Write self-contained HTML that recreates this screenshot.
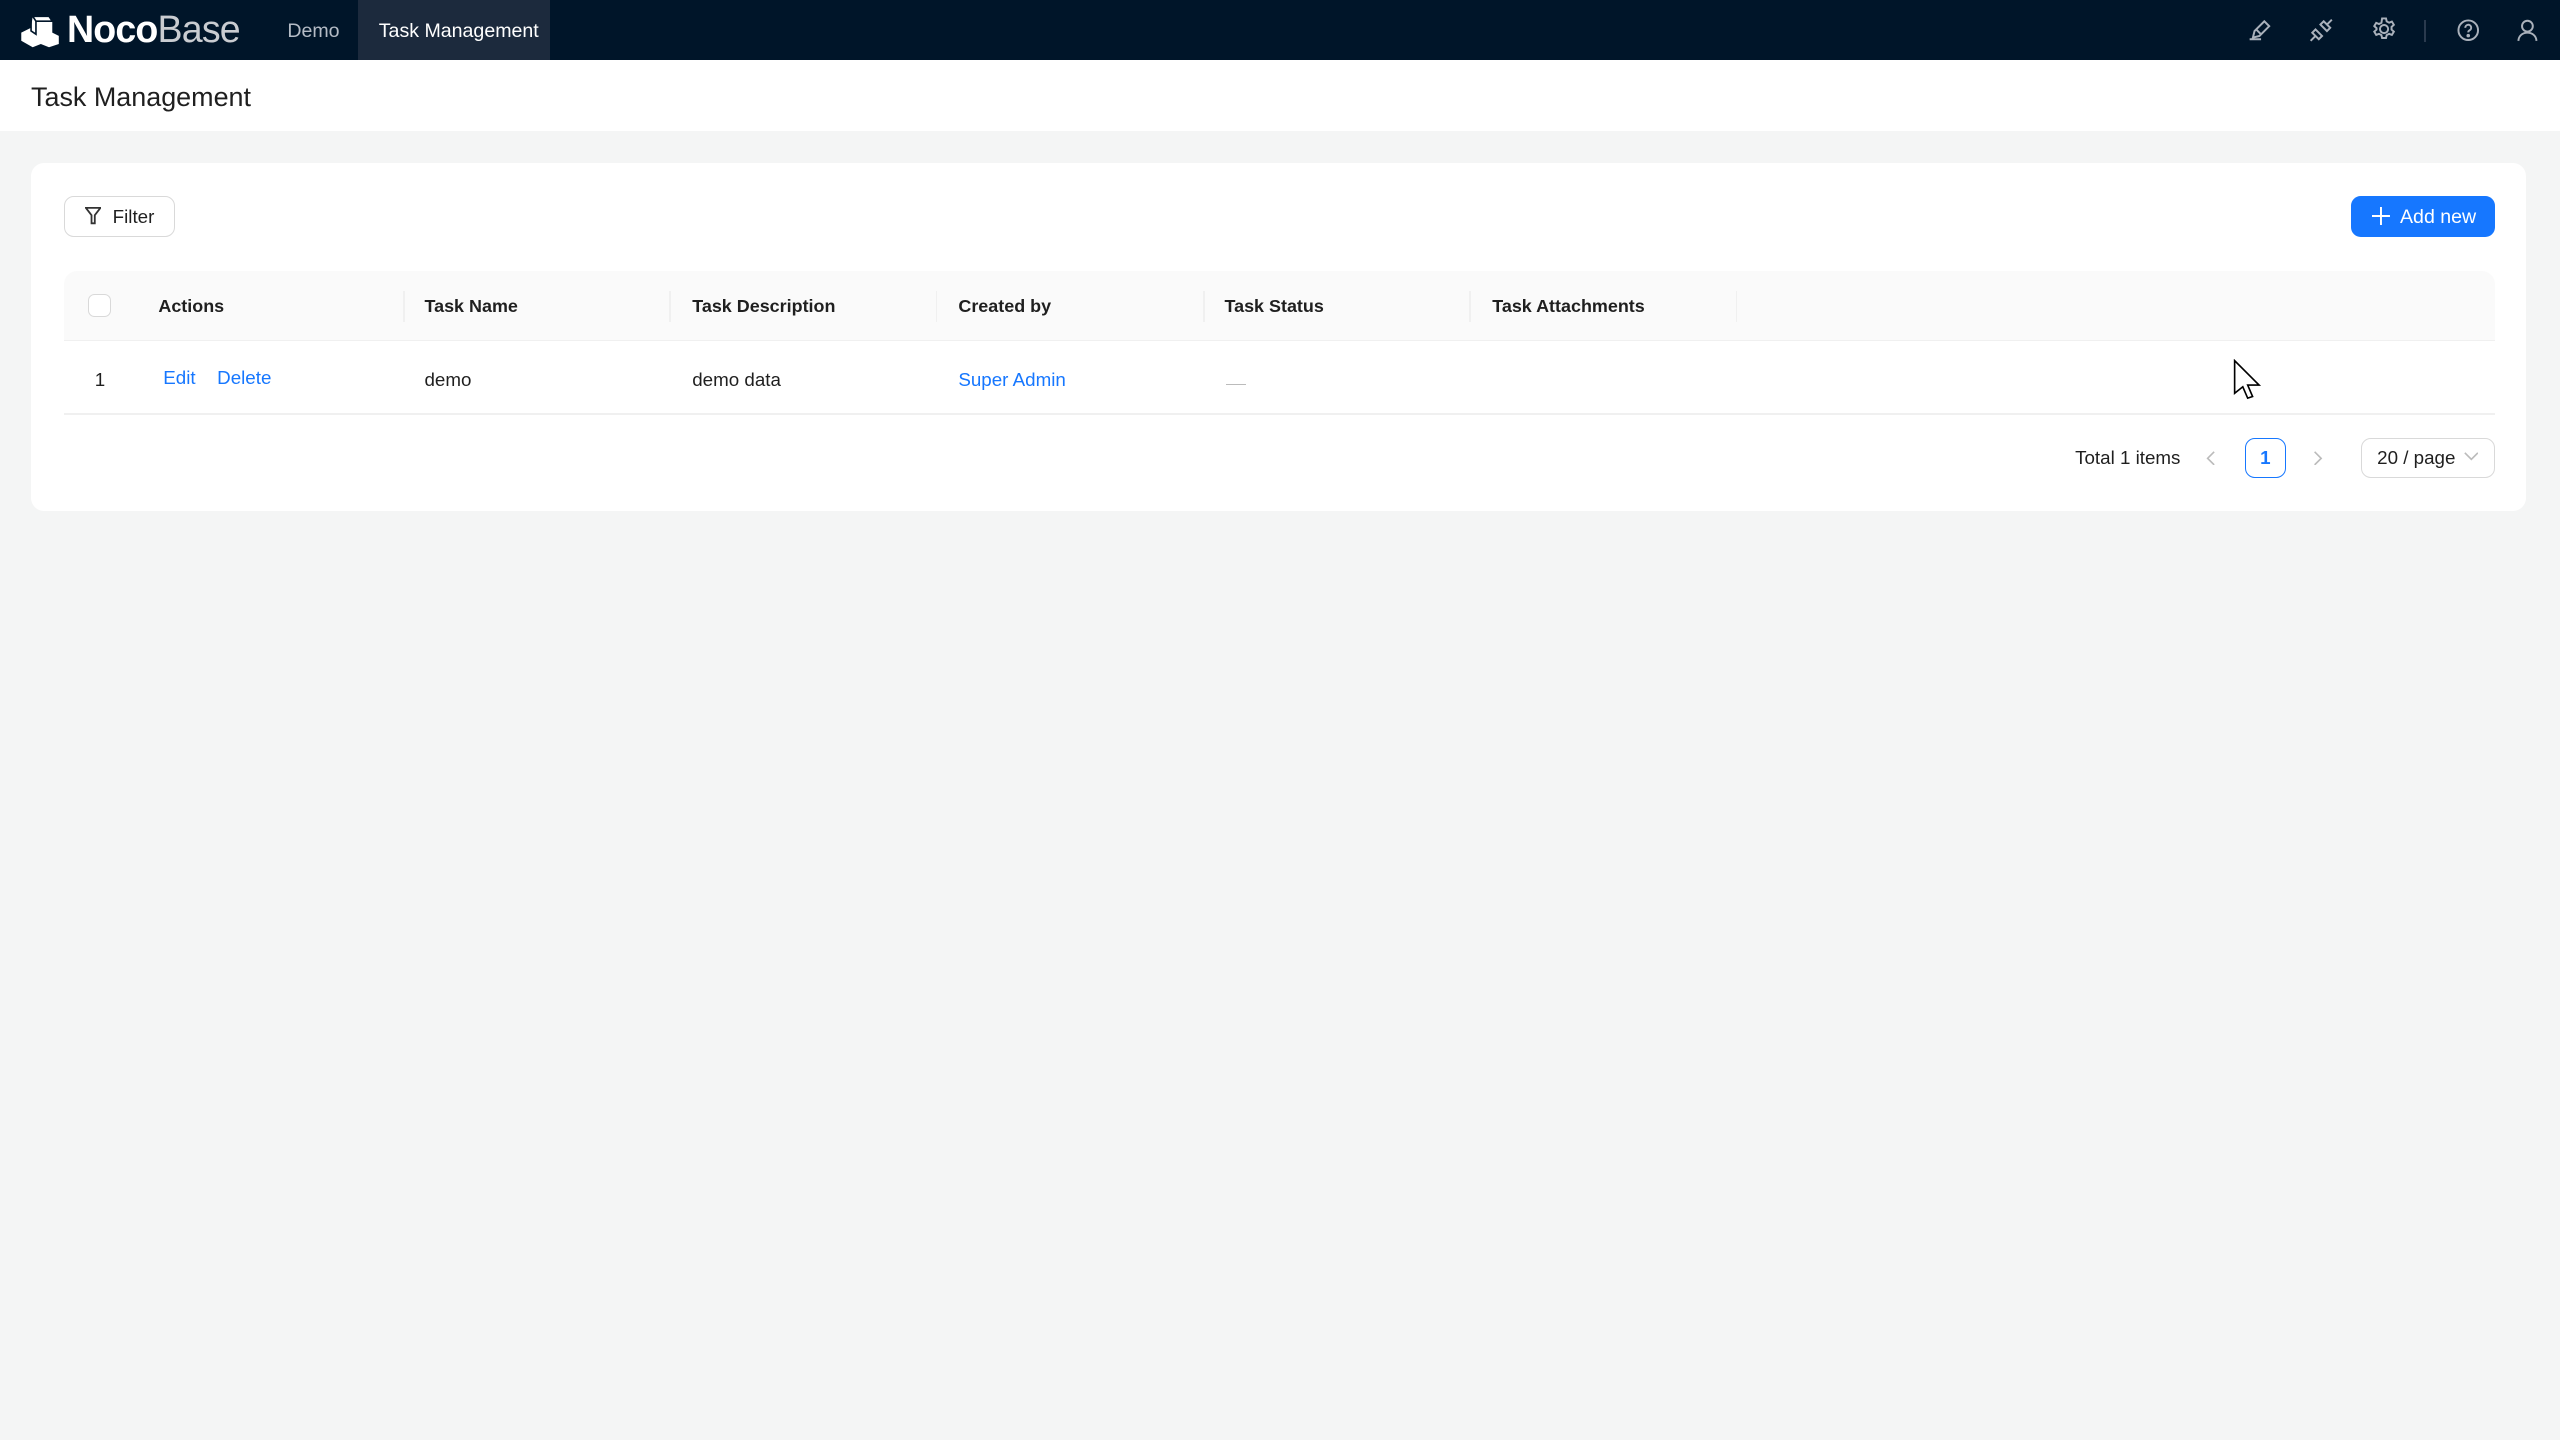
<!DOCTYPE html>
<html><head><meta charset="utf-8">
<style>
*{box-sizing:border-box;margin:0;padding:0}
html,body{width:2560px;height:1440px;overflow:hidden;background:#f4f5f5}
#w{zoom:1.632653;width:1568px;height:882px;position:relative;font-family:"Liberation Sans",sans-serif;color:#1f1f1f;font-size:12px}
.top{position:absolute;left:0;top:0;width:1568px;height:37px;background:#001529}
.abs{position:absolute}
.hdr{position:absolute;left:0;top:37px;width:1568px;height:43px;background:#fff}
.card{position:absolute;left:19px;top:100px;width:1528px;height:213px;background:#fff;border-radius:8px}
.th{position:absolute;top:166px;left:39px;width:1489px;height:43px;background:#fafafa;border-bottom:1px solid #f0f0f0;border-radius:8px 8px 0 0}
.sep{position:absolute;top:178px;width:1px;height:19px;background:#f0f0f0}
.hd{position:absolute;top:181px;font-weight:bold;font-size:11px}
.cell{position:absolute;top:226px;font-size:11.5px}
.blue{color:#1677ff}
svg{position:absolute}
</style></head><body><div id="w">
<div class="top">
 <svg style="left:11px;top:8px" width="26" height="22" viewBox="0 0 26 22"><path d="M9 2 L19 2 L21 5 L21 12 L25 14 L25 19 L19 21 L14 19 L9 21 L2 17 L2 12 L8 9 Z" fill="#fff"/><path d="M9 2 L19 2 L21 5 L11 5 Z M11 5 L11 13 L8 11 L8 3" fill="none" stroke="#001529" stroke-width="1"/></svg>
 <div class="abs" style="left:41px;top:5px;font-size:23px;font-weight:bold;color:#fff;letter-spacing:-0.5px">Noco<span style="font-weight:normal;color:#c9ccd1">Base</span></div>
 <div class="abs" style="left:176px;top:12px;font-size:12px;color:#b5bcc6">Demo</div>
 <div class="abs" style="left:219px;top:0;width:118px;height:37px;background:#1c2a3d"></div>
 <div class="abs" style="left:232px;top:12px;font-size:12px;color:#fff">Task Management</div>
 <svg style="left:1377px;top:11px" width="15" height="15" viewBox="0 0 15 15" fill="none" stroke="#aab1bb" stroke-width="1.2"><path d="M1 13h7M3 12l1-4 6-6 3 3-6 6z M5 7l3 3"/></svg>
 <svg style="left:1414px;top:11px" width="15" height="15" viewBox="0 0 15 15" fill="none" stroke="#aab1bb" stroke-width="1.2"><path d="M1 14l3-3M14 1l-3 3M4 7l4 4-2 2-4-4zM7 4l4 4 2-2-4-4z"/></svg>
 <svg style="left:1452px;top:10px" width="16" height="16" viewBox="0 0 16 16" fill="none" stroke="#aab1bb" stroke-width="1.2"><circle cx="8" cy="8" r="2.5"/><path d="M6.8 1.5h2.4l.4 1.8 1.5.8 1.7-.7 1.2 2-1.4 1.3v1.6l1.4 1.3-1.2 2-1.7-.7-1.5.8-.4 1.8H6.8l-.4-1.8-1.5-.8-1.7.7-1.2-2 1.4-1.3V7.5L2 6.2l1.2-2 1.7.7 1.5-.8z"/></svg>
 <div class="abs" style="left:1485px;top:12px;width:1px;height:14px;background:#2a3a4e"></div>
 <svg style="left:1504px;top:11px" width="15" height="15" viewBox="0 0 15 15" fill="none" stroke="#aab1bb" stroke-width="1.2"><circle cx="7.5" cy="7.5" r="6"/><path d="M5.7 6a1.8 1.8 0 1 1 2.5 1.6c-.5.3-.7.6-.7 1.2"/><circle cx="7.5" cy="10.8" r=".5" fill="#aab1bb"/></svg>
 <svg style="left:1541px;top:11px" width="14" height="15" viewBox="0 0 14 15" fill="none" stroke="#aab1bb" stroke-width="1.2"><circle cx="7" cy="5" r="3.3"/><path d="M1.5 14c0-3 2.5-5 5.5-5s5.5 2 5.5 5"/></svg>
</div>
<div class="hdr"><div class="abs" style="left:19px;top:13px;font-size:16.5px;color:#1f1f1f">Task Management</div></div>
<div class="card"></div>
<div class="abs" style="left:39px;top:120px;width:68px;height:25px;border:1px solid #d9d9d9;border-radius:6px;background:#fff"></div>
<svg style="left:52px;top:127px" width="10" height="11" viewBox="0 0 10 11" fill="none" stroke="#333" stroke-width="1.1"><path d="M.5.5h9L6 5v5H4V5z"/></svg>
<div class="abs" style="left:69px;top:126px;font-size:11.5px">Filter</div>
<div class="abs" style="left:1440px;top:120px;width:88px;height:25px;background:#1677ff;border-radius:6px"></div>
<svg style="left:1453px;top:127px" width="11" height="11" viewBox="0 0 11 11" stroke="#fff" stroke-width="1.2"><path d="M5.5 0v11M0 5.5h11"/></svg>
<div class="abs" style="left:1470px;top:126px;font-size:12px;color:#fff">Add new</div>
<div class="th"></div>
<div class="abs" style="left:54px;top:180px;width:14px;height:14px;border:1px solid #d9d9d9;border-radius:4px;background:#fff"></div>
<div class="sep" style="left:247px"></div><div class="sep" style="left:410px"></div><div class="sep" style="left:573px"></div><div class="sep" style="left:737px"></div><div class="sep" style="left:900px"></div><div class="sep" style="left:1063px"></div>
<div class="hd" style="left:97px">Actions</div>
<div class="hd" style="left:260px">Task Name</div>
<div class="hd" style="left:424px">Task Description</div>
<div class="hd" style="left:587px">Created by</div>
<div class="hd" style="left:750px">Task Status</div>
<div class="hd" style="left:914px">Task Attachments</div>
<div class="abs" style="left:39px;top:253px;width:1489px;height:1px;background:#f0f0f0"></div>
<div class="cell" style="left:58px">1</div>
<div class="cell blue" style="left:100px;top:225px">Edit</div>
<div class="cell blue" style="left:133px;top:225px">Delete</div>
<div class="cell" style="left:260px">demo</div>
<div class="cell" style="left:424px">demo data</div>
<div class="cell blue" style="left:587px">Super Admin</div>
<div class="abs" style="left:751px;top:235px;width:12px;height:1px;background:#bbb"></div>
<div class="abs" style="left:1271px;top:274px;font-size:11.5px">Total 1 items</div>
<svg style="left:1351px;top:276px" width="6" height="9" viewBox="0 0 6 9" fill="none" stroke="#bbb" stroke-width="1"><path d="M5 .5l-4 4 4 4"/></svg>
<div class="abs" style="left:1375px;top:268px;width:25px;height:25px;border:1px solid #1677ff;border-radius:6px;color:#1677ff;font-weight:bold;text-align:center;line-height:23px;font-size:11.5px">1</div>
<svg style="left:1417px;top:276px" width="6" height="9" viewBox="0 0 6 9" fill="none" stroke="#bbb" stroke-width="1"><path d="M1 .5l4 4-4 4"/></svg>
<div class="abs" style="left:1446px;top:268px;width:82px;height:25px;border:1px solid #d9d9d9;border-radius:6px"></div>
<div class="abs" style="left:1456px;top:274px;font-size:11.5px">20 / page</div>
<svg style="left:1509px;top:277px" width="9" height="6" viewBox="0 0 9 6" fill="none" stroke="#bbb" stroke-width="1"><path d="M.5.5l4 4 4-4"/></svg>
<svg style="left:1368px;top:220px" width="18" height="26" viewBox="0 0 18 26"><path d="M1 1v20l5-4 3 7 3-1-3-7h7z" fill="#fff" stroke="#000" stroke-width="1"/></svg>
</div></body></html>
